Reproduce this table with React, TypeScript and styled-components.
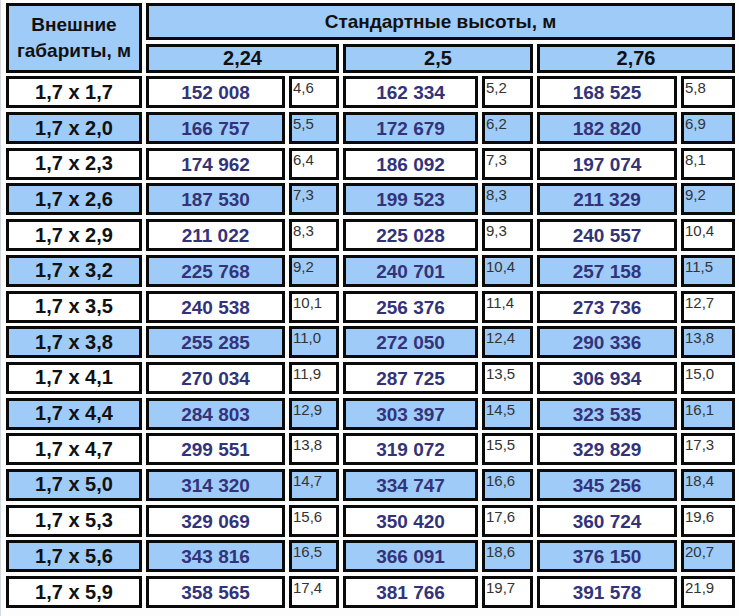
import React from 'react';
import styled, { createGlobalStyle } from 'styled-components';

const GlobalStyle = createGlobalStyle`
  html, body {
    margin: 0;
    padding: 0;
    background: #ffffff;
  }
  body {
    font-family: Arial, "Liberation Sans", sans-serif;
  }
`;

const Page = styled.div`
  width: 739px;
  height: 616px;
  box-sizing: border-box;
  padding: 3px 0 0 5px;
  background: #fdfdfd;
  border-left: 1px solid #d4dae0;
`;

const Grid = styled.div`
  display: grid;
  grid-template-columns: 136px 139px 50px 135px 51px 140px 54px;
  grid-template-rows: 37px 29px repeat(15, 32px);
  column-gap: 4px;
  row-gap: 3.7px;
`;

const Cell = styled.div<{ $blue?: boolean }>`
  box-sizing: border-box;
  border: 3px solid #0a0a0a;
  background: ${(p) => (p.$blue ? '#9fcbf8' : '#ffffff')};
  display: flex;
  align-items: center;
  justify-content: center;
  overflow: hidden;
`;

const HeaderCell = styled(Cell)<{ $big?: boolean }>`
  font-weight: bold;
  font-size: ${(p) => (p.$big ? '20px' : '19px')};
  color: #111;
  text-align: center;
  line-height: 26px;
`;

const LabelCell = styled(Cell)`
  font-weight: bold;
  font-size: 20px;
  color: #111;
`;

const PriceCell = styled(Cell)`
  font-weight: bold;
  font-size: 19px;
  color: #33337a;
  padding-top: 2px;
`;

const SmallCell = styled(Cell)`
  align-items: flex-start;
  justify-content: flex-start;
  font-size: 15px;
  color: #333;
  padding: 0 0 0 1px;
  line-height: 17px;
`;

type Row = { size: string; vals: [string, string][] };

const rows: Row[] = [
  { size: '1,7 x 1,7', vals: [['152 008', '4,6'], ['162 334', '5,2'], ['168 525', '5,8']] },
  { size: '1,7 x 2,0', vals: [['166 757', '5,5'], ['172 679', '6,2'], ['182 820', '6,9']] },
  { size: '1,7 x 2,3', vals: [['174 962', '6,4'], ['186 092', '7,3'], ['197 074', '8,1']] },
  { size: '1,7 x 2,6', vals: [['187 530', '7,3'], ['199 523', '8,3'], ['211 329', '9,2']] },
  { size: '1,7 x 2,9', vals: [['211 022', '8,3'], ['225 028', '9,3'], ['240 557', '10,4']] },
  { size: '1,7 x 3,2', vals: [['225 768', '9,2'], ['240 701', '10,4'], ['257 158', '11,5']] },
  { size: '1,7 x 3,5', vals: [['240 538', '10,1'], ['256 376', '11,4'], ['273 736', '12,7']] },
  { size: '1,7 x 3,8', vals: [['255 285', '11,0'], ['272 050', '12,4'], ['290 336', '13,8']] },
  { size: '1,7 x 4,1', vals: [['270 034', '11,9'], ['287 725', '13,5'], ['306 934', '15,0']] },
  { size: '1,7 x 4,4', vals: [['284 803', '12,9'], ['303 397', '14,5'], ['323 535', '16,1']] },
  { size: '1,7 x 4,7', vals: [['299 551', '13,8'], ['319 072', '15,5'], ['329 829', '17,3']] },
  { size: '1,7 x 5,0', vals: [['314 320', '14,7'], ['334 747', '16,6'], ['345 256', '18,4']] },
  { size: '1,7 x 5,3', vals: [['329 069', '15,6'], ['350 420', '17,6'], ['360 724', '19,6']] },
  { size: '1,7 x 5,6', vals: [['343 816', '16,5'], ['366 091', '18,6'], ['376 150', '20,7']] },
  { size: '1,7 x 5,9', vals: [['358 565', '17,4'], ['381 766', '19,7'], ['391 578', '21,9']] },
];

const heights = ['2,24', '2,5', '2,76'];

const App: React.FC = () => (
  <>
    <GlobalStyle />
    <Page>
      <Grid>
        <HeaderCell $blue style={{ gridRow: '1 / span 2' }}>
          Внешние<br />габариты, м
        </HeaderCell>
        <HeaderCell $blue style={{ gridColumn: '2 / span 6' }}>
          Стандартные высоты, м
        </HeaderCell>
        {heights.map((h) => (
          <HeaderCell $blue $big key={h} style={{ gridColumn: 'span 2' }}>
            {h}
          </HeaderCell>
        ))}
        {rows.map((r, i) => {
          const blue = i % 2 === 1;
          return (
            <React.Fragment key={r.size}>
              <LabelCell $blue={blue}>{r.size}</LabelCell>
              {r.vals.map(([price, small]) => (
                <React.Fragment key={price}>
                  <PriceCell $blue={blue}>{price}</PriceCell>
                  <SmallCell $blue={blue}>{small}</SmallCell>
                </React.Fragment>
              ))}
            </React.Fragment>
          );
        })}
      </Grid>
    </Page>
  </>
);

export default App;
